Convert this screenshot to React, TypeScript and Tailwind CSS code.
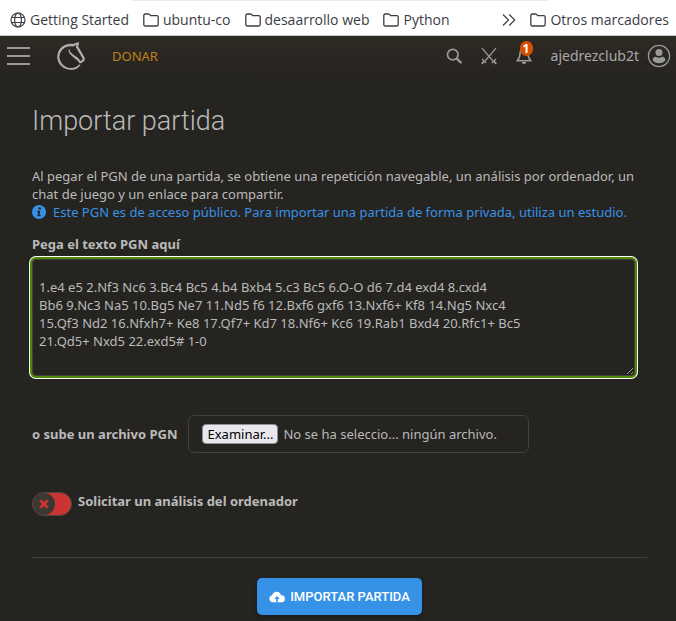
import React, { useState } from 'react';
import clsx from 'clsx';

const PGN = `1.e4 e5 2.Nf3 Nc6 3.Bc4 Bc5 4.b4 Bxb4 5.c3 Bc5 6.O-O d6 7.d4 exd4 8.cxd4
Bb6 9.Nc3 Na5 10.Bg5 Ne7 11.Nd5 f6 12.Bxf6 gxf6 13.Nxf6+ Kf8 14.Ng5 Nxc4
15.Qf3 Nd2 16.Nfxh7+ Ke8 17.Qf7+ Kd7 18.Nf6+ Kc6 19.Rab1 Bxd4 20.Rfc1+ Bc5
21.Qd5+ Nxd5 22.exd5# 1-0`;

const bookmarks = ['ubuntu-co', 'desaarrollo web', 'Python'];

const FolderIcon = () => (
  <svg viewBox="0 0 16 16" className="h-4 w-4 shrink-0" fill="none" stroke="#3c3c44" strokeWidth="1.3" strokeLinejoin="round">
    <path d="M.8 12.6V3.4c0-.8.6-1.4 1.4-1.4h3.3c.4 0 .7.1 1 .4l1.3 1.3h6c.8 0 1.4.6 1.4 1.4v7.5c0 .8-.6 1.4-1.4 1.4H2.2c-.8 0-1.4-.6-1.4-1.4z" />
  </svg>
);

const GlobeIcon = () => (
  <svg viewBox="0 0 16 16" className="h-4 w-4 shrink-0" fill="none" stroke="#3c3c44" strokeWidth="1.2">
    <circle cx="8" cy="8" r="7" />
    <ellipse cx="8" cy="8" rx="3.4" ry="7" />
    <path d="M1.6 5.5h12.8M1.6 10.5h12.8" />
  </svg>
);

const ChevronsIcon = () => (
  <svg viewBox="0 0 14 14" className="h-[14px] w-[14px]" fill="none" stroke="#3c3c44" strokeWidth="1.2">
    <path d="M1 1.5 6.5 7 1 12.5M7.2 1.5 12.7 7l-5.5 5.5" />
  </svg>
);

const KnightLogo = () => (
  <svg viewBox="-1 -1 52 52" className="h-7 w-7" fill="#b0b0b0" stroke="#b0b0b0" strokeWidth="2" strokeLinejoin="round">
    <path d="M38.956.5c-3.53.418-6.452.902-9.286 2.984C5.534 1.786-.692 18.533.68 29.364 3.493 50.214 31.918 55.785 41.329 41.7c-7.444 7.696-19.276 8.752-28.323 3.084C3.959 39.116-.506 27.392 4.683 17.567 9.873 7.742 18.996 4.535 29.03 6.405c2.43-1.418 5.225-3.22 7.655-3.187l-1.694 4.86 12.752 21.37c-.439 5.654-5.459 6.112-5.459 6.112-.574-1.47-1.634-2.942-4.842-6.036-3.207-3.094-17.465-10.177-15.788-16.207-2.001 6.967 10.311 14.152 14.04 17.663 3.73 3.51 5.426 6.04 5.795 6.756 0 0 9.392-2.504 7.838-8.927L37.4 7.171z" />
  </svg>
);

const SearchIcon = () => (
  <svg viewBox="0 0 16 16" className="h-4 w-4" fill="none" stroke="#999999">
    <circle cx="6.8" cy="6.6" r="5.3" strokeWidth="1.7" />
    <path d="m10.8 10.6 3.9 3.8" strokeWidth="2.2" strokeLinecap="round" />
  </svg>
);

const SwordsIcon = () => (
  <svg viewBox="0 0 16 18" className="h-[18px] w-4" fill="none" stroke="#999999" strokeWidth="1.3">
    <path d="M1 1.2 12.8 15M15 1.2 3.2 15" />
    <path d="M.8 16.8l2.6-3M15.2 16.8l-2.6-3" strokeWidth="1.8" />
    <path d="M1.2 11.8c.6 1.6 2 3 4 4M14.8 11.8c-.6 1.6-2 3-4 4" />
  </svg>
);

const BellIcon = () => (
  <svg viewBox="0 0 16 18" className="h-[18px] w-4" fill="none" stroke="#999999" strokeWidth="1.5" strokeLinejoin="round">
    <path d="M8 2C5.2 2 4 4.2 4 6.6c0 3.6-1 5.4-2.9 7.2h13.8C13 12 12 10.2 12 6.6 12 4.2 10.8 2 8 2z" />
    <path d="M5.8 15h4.4c-.3 1.5-1.1 2.2-2.2 2.2S6.1 16.5 5.8 15z" fill="#999999" stroke="none" />
  </svg>
);

const AvatarIcon = () => (
  <svg viewBox="0 0 24 24" className="h-6 w-6 shrink-0">
    <circle cx="12" cy="12" r="10.6" fill="none" stroke="#999999" strokeWidth="1.2" />
    <circle cx="12" cy="8.6" r="3.5" fill="#999999" />
    <path d="M5.6 16.2c0-2.3 1.5-3.4 3.3-3.4 1 .7 2 1 3.1 1s2.1-.3 3.1-1c1.8 0 3.3 1.1 3.3 3.4-1.5 1.9-3.7 3-6.4 3s-4.9-1.1-6.4-3z" fill="#999999" />
  </svg>
);

const InfoIcon = () => (
  <svg viewBox="0 0 14 14" className="h-[14px] w-[14px] shrink-0">
    <circle cx="7" cy="7" r="7" fill="#3692e7" />
    <circle cx="7.7" cy="3.4" r="1.2" fill="#262421" />
    <path d="M5.2 5.7h3.2L7.4 9.9h1.2v1.3H5.2l1-4.2h-1z" fill="#262421" />
  </svg>
);

const CloudIcon = () => (
  <svg viewBox="0 0 16 12" className="h-3 w-4">
    <path d="M4 11.2A3.5 3.5 0 0 1 3.1 4.3 4.6 4.6 0 0 1 12 4.2a3.5 3.5 0 0 1 .7 7z" fill="#ffffff" />
    <path d="M7.2 11.2V8H5.4L8 5l2.600 3H8.800v3.200z" fill="#3692e7" />
  </svg>
);

function BookmarksBar() {
  return (
    <div className="border-b border-[#c4c4c8] bg-white font-['Open_Sans','Noto_Sans',sans-serif]">
      <div className="mr-32 ml-[131px] h-px bg-[#ededf0]" />
      <nav className="flex h-[34px] items-center gap-[14px] pt-1 pr-[7px] pl-[10px] text-sm whitespace-nowrap text-[#3c3c44]">
        <a href="#" className="flex items-center gap-1">
          <GlobeIcon />
          Getting Started
        </a>
        {bookmarks.map((name) => (
          <a key={name} href="#" className="flex items-center gap-1">
            <FolderIcon />
            {name}
          </a>
        ))}
        <button aria-label="Más marcadores" className="ml-auto">
          <ChevronsIcon />
        </button>
        <a href="#" className="flex items-center gap-1">
          <FolderIcon />
          Otros marcadores
        </a>
      </nav>
    </div>
  );
}

function TopNav() {
  return (
    <header className="flex h-10 items-center bg-linear-to-b from-[#2e2a24] to-[#262421] pr-[5px] pl-[7px]">
      <button aria-label="Menú" className="flex w-[23px] flex-col gap-[6px]">
        <span className="h-[2px] w-full bg-[#999999]" />
        <span className="h-[2px] w-full bg-[#999999]" />
        <span className="h-[2px] w-full bg-[#999999]" />
      </button>
      <a href="#" aria-label="Inicio" className="ml-[27px]">
        <KnightLogo />
      </a>
      <a href="#" className="ml-[27px] text-[13px] text-[#bf811d]">
        DONAR
      </a>
      <div className="ml-auto flex items-center gap-[19px]">
        <button aria-label="Buscar">
          <SearchIcon />
        </button>
        <button aria-label="Desafíos">
          <SwordsIcon />
        </button>
        <button aria-label="Notificaciones" className="relative">
          <BellIcon />
          <span className="absolute -top-[6px] left-1 flex h-[15px] w-[13px] items-center justify-center rounded-full bg-[#d64f00] text-xs font-bold text-white">
            1
          </span>
        </button>
        <a href="#" className="flex items-center gap-2 text-sm text-[#a8a8a8]">
          ajedrezclub2t
          <AvatarIcon />
        </a>
      </div>
    </header>
  );
}

export default function App() {
  const [pgn, setPgn] = useState(PGN);
  const [analyse, setAnalyse] = useState(false);
  const [fileName, setFileName] = useState('No se ha seleccio... ningún archivo.');

  return (
    <div className="min-h-screen bg-[#262421] font-['Noto_Sans',sans-serif] text-[13px] leading-[18px] text-[#bababa]">
      <BookmarksBar />
      <TopNav />
      <main className="pt-[25px] pr-[29px] pb-[6px] pl-8">
        <h1 className="font-['Roboto',sans-serif] text-[27px] leading-10 font-light">Importar partida</h1>
        <form className="mt-[26px]" onSubmit={(e) => e.preventDefault()}>
          <p>
            Al pegar el PGN de una partida, se obtiene una repetición navegable, un análisis por ordenador, un chat de juego y un
            enlace para compartir.
          </p>
          <a href="#" className="flex items-center gap-[7px] text-[#3692e7]">
            <InfoIcon />
            Este PGN es de acceso público. Para importar una partida de forma privada, utiliza un estudio.
          </a>

          <label htmlFor="pgn" className="mt-[14px] block font-bold">
            Pega el texto PGN aquí
          </label>
          <div className="mt-[6px] pr-3">
            <textarea
              id="pgn"
              rows={5}
              spellCheck={false}
              value={pgn}
              onChange={(e) => setPgn(e.target.value)}
              className="block w-full rounded-[4px] border border-[#404040] bg-[#262421] px-[6px] pt-[18px] pb-[7px] shadow-[0_0_0_2px_#4d8a02,0_0_0_3px_#ffffff] outline-none"
            />
          </div>

          <div className="mt-[39px] flex items-center gap-[11px]">
            <label htmlFor="pgn-file" className="font-bold">
              o sube un archivo PGN
            </label>
            <label
              htmlFor="pgn-file"
              className="flex h-[38px] w-[341px] items-center gap-[5px] rounded-[6px] border border-[#404040] px-[13px]"
            >
              <input
                id="pgn-file"
                type="file"
                accept=".pgn"
                className="sr-only"
                onChange={(e) => setFileName(e.target.files?.[0]?.name ?? fileName)}
              />
              <span className="rounded-[4px] border border-[#8f8f9d] bg-[#e9e9ed] px-1 text-black">Examinar...</span>
              <span>{fileName}</span>
            </label>
          </div>

          <div className="mt-[39px] flex gap-[6px]">
            <label htmlFor="analyse" className="cursor-pointer">
              <input
                id="analyse"
                type="checkbox"
                checked={analyse}
                onChange={(e) => setAnalyse(e.target.checked)}
                className="sr-only"
              />
              <span
                className={clsx(
                  'flex h-6 w-10 rounded-full border border-[#4a4744]',
                  analyse ? 'justify-end bg-[#629924]' : 'bg-[#cc3333]',
                )}
              >
                <span className="flex h-[22px] w-[22px] items-center justify-center rounded-full bg-[#3a3733]">
                  <svg viewBox="0 0 10 10" className="h-[10px] w-[10px]" stroke="#cc3333" strokeWidth="2.8" fill="none">
                    {analyse ? <path d="M1 5.5 4 8.5 9 1.5" stroke="#629924" /> : <path d="m1.2 1.2 7.6 7.6M8.8 1.2 1.2 8.8" />}
                  </svg>
                </span>
              </span>
            </label>
            <label htmlFor="analyse" className="font-bold">
              Solicitar un análisis del ordenador
            </label>
          </div>

          <div className="mt-[41px] flex justify-center border-t border-[#404040] pt-5">
            <button
              type="submit"
              className="flex h-[37px] items-center gap-[5px] rounded-[5px] bg-[#3692e7] px-3 font-['Roboto',sans-serif] font-medium text-white uppercase shadow-[0_2px_4px_rgba(0,0,0,0.3)]"
            >
              <CloudIcon />
              Importar partida
            </button>
          </div>
        </form>
      </main>
    </div>
  );
}
